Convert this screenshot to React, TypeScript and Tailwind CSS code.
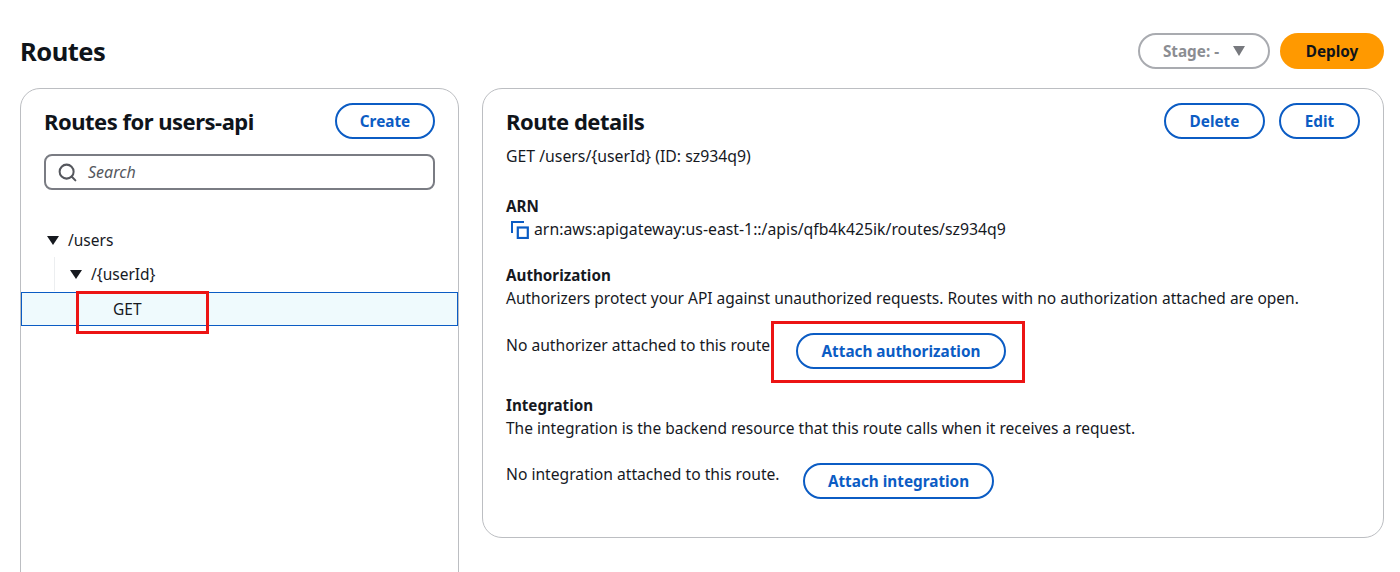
import { Search } from 'lucide-react';

const font = { fontFamily: '"Noto Sans", "Open Sans", sans-serif' };

const OutlineButton = ({ label, className }: { label: string; className: string }) => (
  <button className={`h-9 rounded-full border-2 border-[#0b5cc4] bg-white pt-[2px] text-[15.3px] font-bold leading-none text-[#0b5cc4] ${className}`}>
    {label}
  </button>
);

const Caret = ({ className }: { className: string }) => (
  <svg viewBox="0 0 14 12" preserveAspectRatio="none" className={className}>
    <path d="M0 0h14L7 12z" fill="currentColor" />
  </svg>
);

const CopyIcon = () => (
  <svg viewBox="0 0 18 18" className="mt-[2px] h-[18px] w-[18px] text-[#0b5cc4]" fill="none" stroke="currentColor">
    <path d="M1 12V1h12" strokeWidth="2" />
    <rect x="6.800" y="6.500" width="10" height="10.500" strokeWidth="2.200" />
  </svg>
);

export default function App() {
  return (
    <div style={font} className="h-[572px] w-[1400px] overflow-hidden bg-white pl-[20px] pr-[16px] text-[16px] text-[#16191f]">
      <div className="flex h-[88px] items-start justify-between pt-[33px]">
        <h1 className="text-[25.5px] font-bold leading-[36px] tracking-[-0.5px] text-[#0f141a]">Routes</h1>
        <div className="flex items-center gap-[10px]">
          <div className="flex h-9 w-[132px] items-center justify-center gap-[14px] rounded-full border-2 border-[#a9abb0] text-[15.3px] font-bold text-[#8b8d92]">
            <span>Stage: -</span>
            <Caret className="h-[10px] w-[12px] text-[#77797e]" />
          </div>
          <button className="h-9 w-[104px] rounded-full bg-[#ff9900] text-[15.3px] font-bold text-[#0f141a]">Deploy</button>
        </div>
      </div>

      <div className="flex items-start gap-[23px]">
        {/* Routes tree */}
        <section className="relative h-[520px] w-[439px] shrink-0 rounded-[20px] border border-[#bcbec2]">
          <div className="px-[23px] pt-[14px]">
            <div className="flex items-center justify-between">
              <h2 className="text-[22px] font-bold leading-9 tracking-[-0.5px] text-[#0f141a]">Routes for users-api</h2>
              <OutlineButton label="Create" className="w-[100px]" />
            </div>
            <div className="mt-[15px] flex h-[36px] items-center rounded-[8px] border-2 border-[#7a7c83] pl-[11px]">
              <Search className="h-[21px] w-[21px] text-[#55575d]" strokeWidth={2.3} />
              <span className="ml-[10px] text-[16px] italic text-[#55575d]">Search</span>
            </div>
          </div>
          <div className="mt-[33px] flex items-center pl-[26px] text-[15.5px] leading-[34px]">
            <Caret className="h-[9px] w-[12px] text-[#16191f]" />
            <span className="ml-[9px]">/users</span>
          </div>
          <div className="ml-[33px] flex items-center border-l border-[#eceef0] pl-[15px] text-[15.5px] leading-[34px]">
            <Caret className="h-[9px] w-[12px] text-[#16191f]" />
            <span className="ml-[9px]">/{'{userId}'}</span>
          </div>
          <div className="mt-[1px] flex h-[34px] items-center border border-[#0b5cc4] bg-[#effafd] pl-[91px] pt-[2px] text-[15.5px]">GET</div>
          <div className="absolute left-[55px] top-[202px] h-[43px] w-[133px] border-[3px] border-[#ec1414]" />
        </section>

        {/* Route details */}
        <section className="relative h-[450px] w-[902px] shrink-0 rounded-[20px] border border-[#bcbec2] px-[23px] pt-[14px]">
          <div className="flex items-center justify-between">
            <h2 className="text-[22px] font-bold leading-9 tracking-[-0.5px] text-[#0f141a]">Route details</h2>
            <div className="flex gap-[14px]">
              <OutlineButton label="Delete" className="w-[101px]" />
              <OutlineButton label="Edit" className="w-[81px]" />
            </div>
          </div>
          <p className="mt-[5px] text-[15.8px] leading-[24px]">GET /users/{'{userId}'} (ID: sz934q9)</p>

          <h3 className="mt-[26px] h-[23px] text-[15.2px] font-bold leading-[24px]">ARN</h3>
          <div className="flex items-center gap-[5px] pl-[5px] text-[15.8px] leading-[24px]">
            <CopyIcon />
            <span>arn:aws:apigateway:us-east-1::/apis/qfb4k425ik/routes/sz934q9</span>
          </div>

          <h3 className="mt-[22px] h-[23px] text-[15.2px] font-bold leading-[24px]">Authorization</h3>
          <p className="text-[15.5px] leading-[24px]">Authorizers protect your API against unauthorized requests. Routes with no authorization attached are open.</p>
          <div className="mt-[23px] flex items-start">
            <span className="w-[290px] text-[15.65px] leading-[24px]">No authorizer attached to this route</span>
            <OutlineButton label="Attach authorization" className="w-[210px]" />
          </div>

          <h3 className="mt-[24px] h-[23px] text-[15.2px] font-bold leading-[24px]">Integration</h3>
          <p className="text-[15.5px] leading-[24px]">The integration is the backend resource that this route calls when it receives a request.</p>
          <div className="mt-[23px] flex items-start">
            <span className="-mt-[1px] w-[297px] text-[15.65px] leading-[24px]">No integration attached to this route.</span>
            <OutlineButton label="Attach integration" className="w-[191px]" />
          </div>
          <div className="absolute left-[288px] top-[232px] h-[62px] w-[254px] border-[3px] border-[#ec1414]" />
        </section>
      </div>
    </div>
  );
}
